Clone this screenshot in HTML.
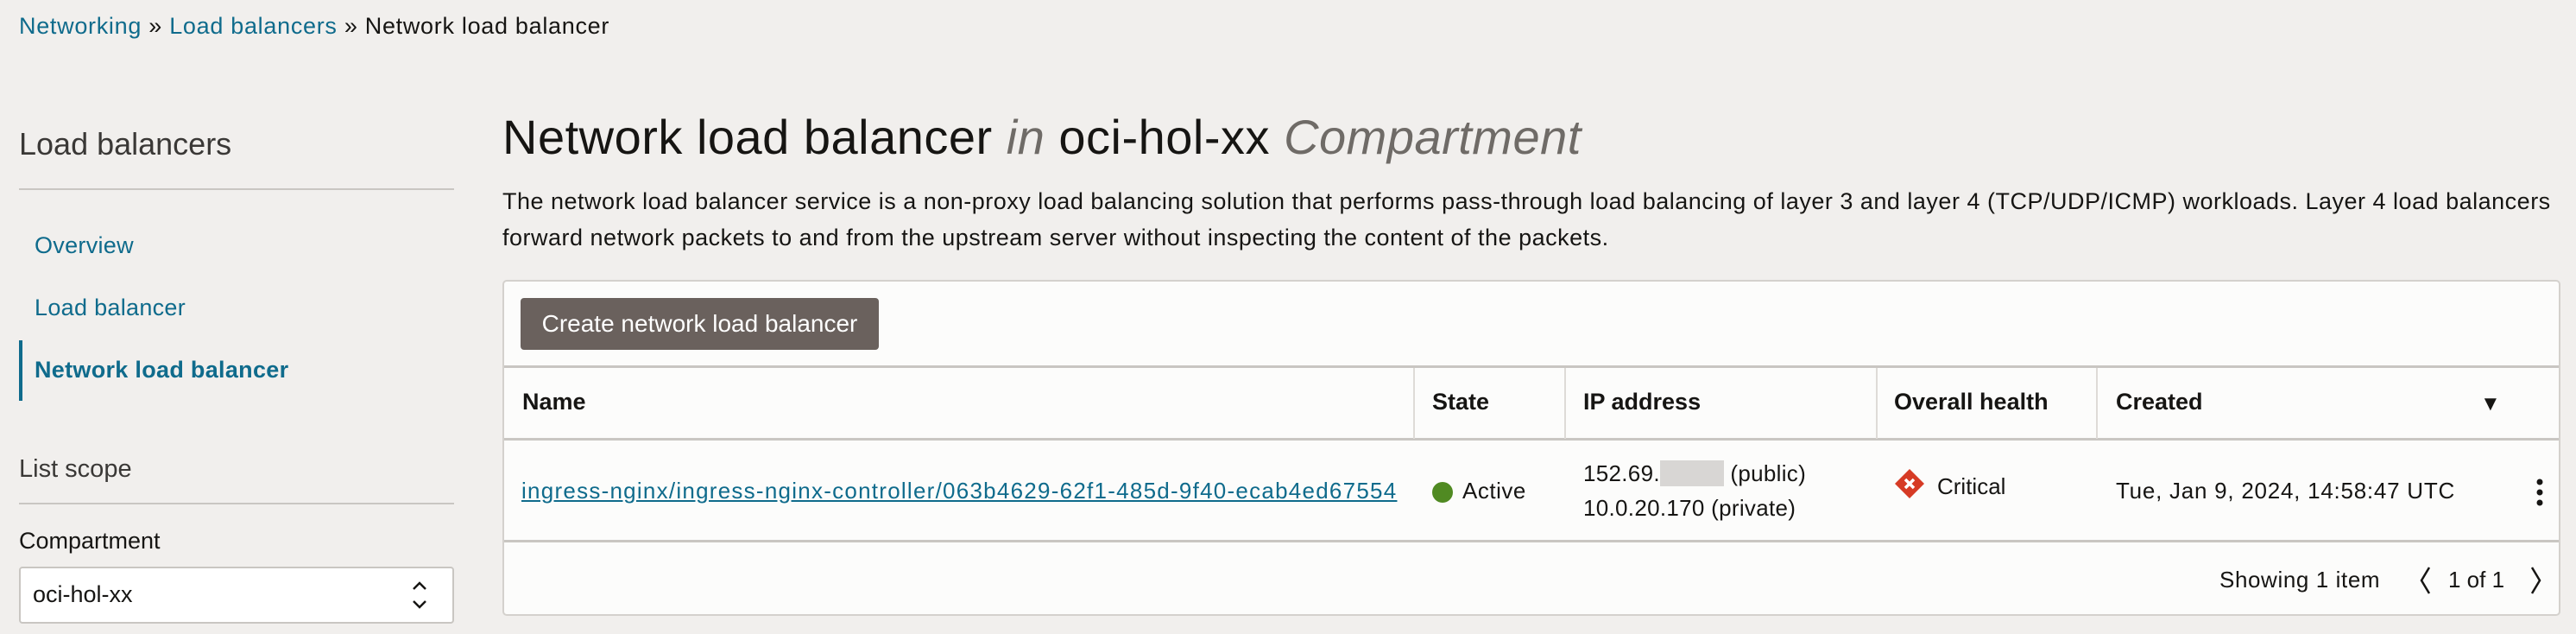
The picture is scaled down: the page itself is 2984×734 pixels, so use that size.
<!DOCTYPE html>
<html><head><meta charset="utf-8"><style>
*{margin:0;padding:0;box-sizing:border-box}
body{width:2984px;height:734px;background:#f1efed;font-family:"Liberation Sans",sans-serif;color:#161513;position:relative;overflow:hidden}
.a{position:absolute;white-space:nowrap}
.lnk{color:#0f6b8c}
.hr{position:absolute;height:3px;background:#c9c6c2}
.th{font-weight:bold;font-size:27px;top:450px}
.vd{position:absolute;width:2px;background:#dedbd7;top:426px;height:82px}
</style></head><body>
<div class="a" style="left:22px;top:15px;font-size:27px;letter-spacing:0.7px"><span class="lnk">Networking</span> » <span class="lnk">Load balancers</span> » Network load balancer</div>

<div class="a" style="left:22px;top:146px;font-size:36px;font-weight:300;color:#3a3836">Load balancers</div>
<div class="hr" style="left:22px;top:218px;width:504px;height:2px"></div>
<div class="a lnk" style="left:40px;top:269px;font-size:27px;letter-spacing:0.3px">Overview</div>
<div class="a lnk" style="left:40px;top:341px;font-size:27px;letter-spacing:0.3px">Load balancer</div>
<div class="a" style="left:22px;top:394px;width:4px;height:70px;background:#0f6b8c"></div>
<div class="a lnk" style="left:40px;top:413px;font-size:27px;font-weight:bold;letter-spacing:0.3px">Network load balancer</div>
<div class="a" style="left:22px;top:527px;font-size:29px;color:#3a3836">List scope</div>
<div class="hr" style="left:22px;top:582px;width:504px;height:2px"></div>
<div class="a" style="left:22px;top:611px;font-size:27px">Compartment</div>
<div class="a" style="left:22px;top:656px;width:504px;height:66px;background:#fff;border:2px solid #c9c6c2;border-radius:4px"></div>
<div class="a" style="left:38px;top:673px;font-size:27px">oci-hol-xx</div>
<svg class="a" style="left:476px;top:671px" width="20" height="36" viewBox="0 0 20 36"><path d="M3 11 L10 4 L17 11 M3 25 L10 32 L17 25" stroke="#161513" stroke-width="2.5" fill="none"/></svg>

<div class="a" style="left:582px;top:126px;font-size:56px;letter-spacing:0.5px">Network load balancer <i style="color:#6f6b67">in</i> oci-hol-xx <i style="color:#6f6b67">Compartment</i></div>
<div class="a" style="left:582px;top:212px;font-size:27px;line-height:42px;letter-spacing:0.5px">The network load balancer service is a non-proxy load balancing solution that performs pass-through load balancing of layer 3 and layer 4 (TCP/UDP/ICMP) workloads. Layer 4 load balancers<br>forward network packets to and from the upstream server without inspecting the content of the packets.</div>

<div class="a" style="left:582px;top:324px;width:2384px;height:389px;background:#fcfcfb;border:2px solid #d4d1cd;border-radius:5px"></div>
<div class="a" style="left:603px;top:345px;width:415px;height:60px;background:#6a615d;border-radius:4px;color:#fff;font-size:28px;line-height:60px;text-align:center">Create network load balancer</div>
<div class="hr" style="left:584px;top:423px;width:2380px"></div>
<div class="hr" style="left:584px;top:507px;width:2380px"></div>
<div class="hr" style="left:584px;top:625px;width:2380px"></div>
<div class="vd" style="left:1637px"></div><div class="vd" style="left:1812px"></div><div class="vd" style="left:2173px"></div><div class="vd" style="left:2428px"></div>
<div class="a th" style="left:605px">Name</div>
<div class="a th" style="left:1659px">State</div>
<div class="a th" style="left:1834px">IP address</div>
<div class="a th" style="left:2194px">Overall health</div>
<div class="a th" style="left:2451px">Created</div>
<div class="a" style="left:2873px;top:454px;font-size:24px">▼</div>

<div class="a lnk" style="left:604px;top:553px;font-size:26px;text-decoration:underline;letter-spacing:1.25px">ingress-nginx/ingress-nginx-controller/063b4629-62f1-485d-9f40-ecab4ed67554</div>
<div class="a" style="left:1659px;top:558px;width:24px;height:24px;border-radius:50%;background:#508a22"></div>
<div class="a" style="left:1694px;top:553px;font-size:26px;letter-spacing:0.5px">Active</div>
<div class="a" style="left:1834px;top:533px;font-size:26px;letter-spacing:0.3px">152.69.<span style="background:#d8d6d4;color:transparent">xx.xxx</span> (public)</div>
<div class="a" style="left:1834px;top:573px;font-size:26px;letter-spacing:0.3px">10.0.20.170 (private)</div>
<svg class="a" style="left:2194px;top:542px" width="36" height="36" viewBox="0 0 36 36"><path d="M18 1 L35 18 L18 35 L1 18Z" fill="#d63b25"/><path d="M13 13 L23 23 M23 13 L13 23" stroke="#fff" stroke-width="3.5"/></svg>
<div class="a" style="left:2244px;top:548px;font-size:26px">Critical</div>
<div class="a" style="left:2451px;top:553px;font-size:26px;letter-spacing:0.75px">Tue, Jan 9, 2024, 14:58:47 UTC</div>
<svg class="a" style="left:2937px;top:553px" width="10" height="34"><circle cx="5" cy="5" r="3.5" fill="#161513"/><circle cx="5" cy="17" r="3.5" fill="#161513"/><circle cx="5" cy="29" r="3.5" fill="#161513"/></svg>

<div class="a" style="left:2571px;top:656px;font-size:26px;letter-spacing:0.6px">Showing 1 item</div>
<svg class="a" style="left:2801px;top:654px" width="16" height="36"><path d="M13 3 L4 18 L13 33" stroke="#161513" stroke-width="2.5" fill="none"/></svg>
<div class="a" style="left:2836px;top:656px;font-size:26px">1 of 1</div>
<svg class="a" style="left:2930px;top:654px" width="16" height="36"><path d="M3 3 L12 18 L3 33" stroke="#161513" stroke-width="2.5" fill="none"/></svg>
</body></html>
